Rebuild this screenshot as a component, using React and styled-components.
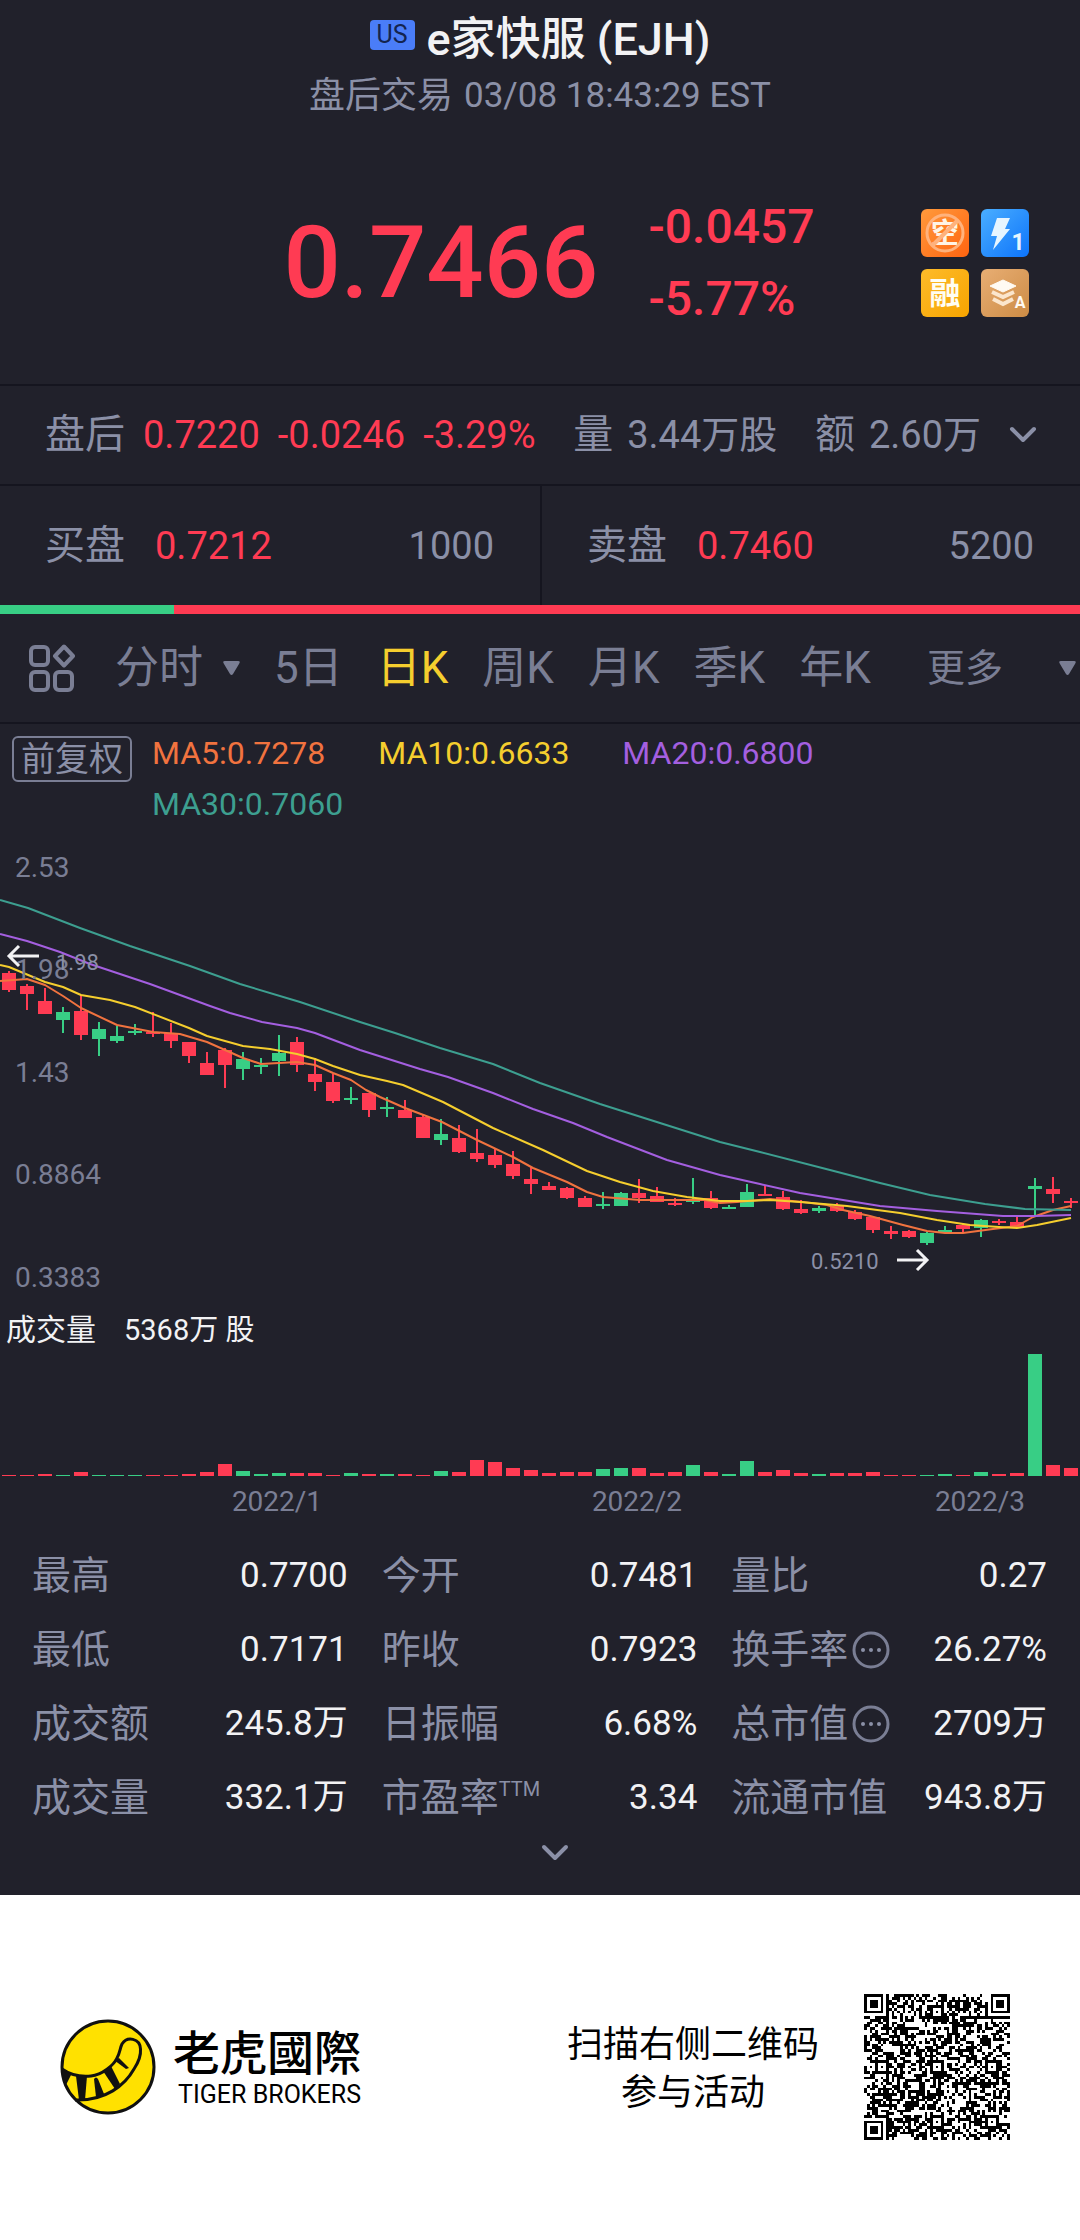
import styled, { createGlobalStyle } from "styled-components";

const colors = {
  bg: "#21212b",
  line: "#15151f",
  grey: "#8b90a7",
  dim: "#7a7e94",
  text: "#f2f2f4",
  red: "#ff3b53",
  green: "#38ce85",
  yellow: "#f5ce2e",
  orange: "#f1733f",
  purple: "#a45fe0",
  teal: "#3d9f90",
};

const GlobalStyle = createGlobalStyle`
  * {
    box-sizing: border-box;
  }

  body {
    margin: 0;
    background: #fff;
    font-family: Roboto, "Noto Sans CJK SC", sans-serif;
  }

  button {
    background: none;
    border: none;
    padding: 0;
    margin: 0;
    color: inherit;
    font: inherit;
    cursor: pointer;
  }

  svg {
    display: block;
  }
`;

const Quote = styled.main`
  background: ${colors.bg};
  color: ${colors.grey};
`;

const Header = styled.header`
  display: flex;
  flex-direction: column;
  align-items: center;
  padding-top: 10px;
`;

const Title = styled.h1`
  display: flex;
  align-items: center;
  gap: 12px;
  margin: 0;
  height: 60px;
  color: ${colors.text};
  font-size: 45px;
  font-weight: 500;
  line-height: 60px;
`;

const Market = styled.span`
  width: 45px;
  height: 30px;
  margin-bottom: 10px;
  border-radius: 4px;
  background: #4a7df8;
  color: #14244f;
  font-size: 25px;
  font-weight: 400;
  line-height: 30px;
  text-align: center;
`;

const Session = styled.p`
  display: flex;
  align-items: center;
  gap: 11px;
  margin: 0;
  font-size: 36px;
  line-height: 52px;
`;

const Time = styled.time`
  font-size: 35px;
`;

const PriceRow = styled.section`
  display: grid;
  grid-template-columns: 1fr auto 1fr;
  align-items: center;
  padding: 69px 51px 49px 69px;
  color: ${colors.red};
`;

const Price = styled.div`
  grid-column: 2;
  display: flex;
  align-items: center;
  gap: 50px;
`;

const Last = styled.strong`
  font-size: 101px;
  font-weight: 500;
  line-height: 120px;
`;

const Change = styled.div`
  display: flex;
  flex-direction: column;
  font-size: 48px;
  font-weight: 500;
  line-height: 72px;
`;

const Badges = styled.div`
  justify-self: end;
  display: grid;
  grid-template-columns: 48px 48px;
  gap: 12px;
`;

const AfterHours = styled.section`
  display: flex;
  align-items: center;
  justify-content: space-between;
  height: 102px;
  padding: 0 43px 0 45px;
  border-top: 2px solid ${colors.line};
  border-bottom: 2px solid ${colors.line};
  white-space: nowrap;
`;

const Group = styled.div`
  display: flex;
  align-items: center;
  gap: ${(p) => p.$gap}px;
`;

const Label = styled.span`
  font-size: 40px;
  line-height: 52px;
`;

const Num = styled.span`
  color: ${(p) => p.$color || "inherit"};
  font-size: 38px;
  line-height: 52px;
`;

const Book = styled.section`
  display: grid;
  grid-template-columns: 1fr 1fr;
`;

const BookSide = styled.div`
  display: flex;
  align-items: center;
  justify-content: space-between;
  height: 119px;
  padding: 0 46px 0 45px;

  & + & {
    border-left: 2px solid ${colors.line};
  }
`;

const Ratio = styled.div`
  display: flex;
  height: 9px;
  background: ${colors.red};
`;

const RatioBuy = styled.div`
  background: ${colors.green};
`;

const TabBar = styled.nav`
  display: flex;
  align-items: center;
  justify-content: space-between;
  height: 110px;
  padding: 0 4px 0 29px;
  border-bottom: 2px solid ${colors.line};
  color: ${colors.dim};
`;

const Tab = styled.button`
  display: flex;
  align-items: center;
  gap: ${(p) => p.$gap || 0}px;
  color: ${(p) => (p.$active ? colors.yellow : colors.dim)};
  font-size: ${(p) => (p.$small ? 38 : 44)}px;
  line-height: 56px;
`;

const Legend = styled.section`
  display: flex;
  align-items: flex-start;
  gap: 20px;
  padding: 12px 40px 0 12px;
`;

const Adjust = styled.button`
  flex: none;
  width: 120px;
  height: 46px;
  border: 2px solid ${colors.dim};
  border-radius: 6px;
  color: ${colors.grey};
  font-size: 34px;
  line-height: 42px;
`;

const Averages = styled.div`
  display: flex;
  flex-wrap: wrap;
  column-gap: 53px;
  font-size: 32px;
  line-height: 51px;
  margin-top: -8px;
`;

const Average = styled.span`
  color: ${(p) => p.$color};
`;

const Plot = styled.svg`
  width: 100%;
  height: auto;
  font-size: 28px;
  fill: ${colors.dim};
`;

const VolumeTitle = styled.div`
  display: flex;
  align-items: center;
  gap: 28px;
  padding-left: 6px;
  color: ${colors.text};
  font-size: 30px;
  line-height: 44px;
`;

const VolumeTotal = styled.span`
  font-size: 29px;
`;

const Stats = styled.dl`
  display: grid;
  grid-template-columns: repeat(3, 1fr);
  column-gap: 34px;
  margin: 0;
  padding: 11px 33px 0 32px;
`;

const Stat = styled.div`
  display: flex;
  align-items: center;
  justify-content: space-between;
  height: 74px;
`;

const StatName = styled.dt`
  display: flex;
  align-items: center;
  gap: 4px;
  font-size: 39px;
  line-height: 50px;
  white-space: nowrap;
`;

const StatValue = styled.dd`
  margin: 0;
  color: ${colors.text};
  font-size: 35px;
  line-height: 50px;
  white-space: nowrap;
`;

const Ttm = styled.small`
  align-self: flex-start;
  margin-left: -4px;
  font-size: 20px;
  line-height: 32px;
`;

const Expand = styled.div`
  display: flex;
  justify-content: center;
  padding: 8px 0 32px 30px;
`;

const Footer = styled.footer`
  display: flex;
  align-items: center;
  justify-content: space-between;
  padding: 99px 70px 99px 60px;
  background: #fff;
  color: #000;
`;

const BrandName = styled.div`
  font-size: 47px;
  font-weight: 500;
  line-height: 56px;
  font-family: "Noto Sans CJK TC", sans-serif;
`;

const BrandSub = styled.div`
  font-size: 25px;
  line-height: 34px;
  text-align: right;
`;

const Invite = styled.p`
  margin: 0;
  padding-top: 3px;
  font-size: 36px;
  line-height: 48px;
  text-align: center;
`;

// [high, open/close top, open/close bottom, low, volume, rising]
const candles = [
  [971, 973, 990, 992, 1, 0],
  [984, 986, 994, 1010, 1, 0],
  [988, 1001, 1014, 1014, 2, 0],
  [1007, 1012, 1020, 1033, 1, 1],
  [995, 1011, 1035, 1040, 4, 0],
  [1022, 1029, 1039, 1056, 1, 1],
  [1026, 1036, 1041, 1043, 1, 1],
  [1024, 1031, 1033, 1035, 1, 1],
  [1012, 1032, 1034, 1037, 1, 0],
  [1023, 1033, 1041, 1048, 1, 0],
  [1042, 1042, 1056, 1063, 2, 0],
  [1052, 1063, 1075, 1075, 4, 0],
  [1048, 1050, 1065, 1088, 12, 0],
  [1052, 1059, 1069, 1080, 5, 1],
  [1058, 1065, 1067, 1074, 2, 1],
  [1035, 1053, 1061, 1076, 3, 1],
  [1037, 1042, 1065, 1072, 3, 0],
  [1058, 1074, 1082, 1091, 3, 0],
  [1074, 1082, 1101, 1103, 1, 0],
  [1087, 1098, 1100, 1104, 3, 1],
  [1093, 1093, 1110, 1117, 2, 0],
  [1097, 1107, 1109, 1117, 2, 1],
  [1100, 1110, 1118, 1118, 2, 0],
  [1114, 1117, 1138, 1138, 1, 0],
  [1119, 1134, 1140, 1145, 5, 1],
  [1125, 1138, 1152, 1153, 4, 0],
  [1129, 1153, 1159, 1162, 16, 0],
  [1148, 1155, 1165, 1168, 14, 0],
  [1151, 1164, 1176, 1179, 8, 0],
  [1167, 1179, 1184, 1194, 6, 0],
  [1182, 1186, 1190, 1190, 3, 0],
  [1187, 1188, 1198, 1199, 4, 0],
  [1196, 1198, 1207, 1207, 4, 0],
  [1192, 1204, 1206, 1209, 7, 1],
  [1192, 1193, 1206, 1206, 8, 1],
  [1179, 1193, 1198, 1203, 8, 0],
  [1187, 1196, 1202, 1202, 3, 0],
  [1198, 1203, 1205, 1206, 4, 0],
  [1178, 1200, 1202, 1204, 11, 1],
  [1191, 1198, 1208, 1209, 4, 0],
  [1205, 1207, 1209, 1209, 2, 1],
  [1184, 1192, 1207, 1207, 15, 1],
  [1186, 1194, 1196, 1196, 4, 0],
  [1191, 1197, 1209, 1210, 6, 0],
  [1200, 1209, 1213, 1214, 3, 0],
  [1206, 1208, 1211, 1213, 2, 1],
  [1203, 1206, 1211, 1212, 3, 0],
  [1210, 1212, 1219, 1220, 3, 0],
  [1217, 1217, 1230, 1233, 4, 0],
  [1226, 1231, 1234, 1239, 1, 0],
  [1230, 1231, 1237, 1238, 1, 0],
  [1232, 1233, 1243, 1245, 1, 1],
  [1226, 1230, 1232, 1232, 2, 1],
  [1224, 1225, 1229, 1232, 1, 0],
  [1219, 1220, 1228, 1237, 4, 1],
  [1219, 1221, 1223, 1225, 2, 0],
  [1216, 1222, 1227, 1227, 3, 0],
  [1178, 1186, 1189, 1215, 122, 1],
  [1177, 1189, 1194, 1203, 11, 0],
  [1198, 1201, 1203, 1208, 8, 0],
];

const averages = [
  {
    label: "MA5:0.7278",
    color: colors.orange,
    points:
      "0,981 27,979 45,985 63,996 81,1008 117,1025 153,1032 180,1034 207,1042 243,1058 261,1064 279,1063 297,1062 315,1065 333,1073 351,1080 366,1090 380,1097 405,1108 442,1122 477,1140 513,1157 533,1168 567,1182 587,1192 603,1197 640,1200 705,1200 720,1203 737,1202 770,1199 803,1202 827,1205 843,1210 870,1216 903,1225 927,1231 945,1233 963,1233 993,1229 1017,1226 1033,1217 1053,1210 1071,1206",
  },
  {
    label: "MA10:0.6633",
    color: colors.yellow,
    points:
      "0,965 9,967 45,982 63,987 81,995 110,1000 135,1007 189,1028 207,1036 243,1046 270,1049 297,1054 315,1059 333,1066 360,1075 387,1081 403,1085 443,1102 493,1128 543,1150 587,1171 620,1182 653,1191 687,1197 720,1201 747,1201 770,1200 800,1202 847,1206 900,1213 937,1220 970,1225 999,1227 1017,1228 1037,1225 1071,1218",
  },
  {
    label: "MA20:0.6800",
    color: colors.purple,
    points:
      "0,934 27,941 60,952 90,964 150,984 210,1006 230,1013 262,1022 297,1028 315,1033 360,1050 420,1069 448,1077 493,1093 533,1109 573,1123 607,1137 667,1160 720,1175 760,1184 800,1193 880,1206 937,1211 1003,1216 1035,1216 1071,1215",
  },
  {
    label: "MA30:0.7060",
    color: colors.teal,
    points:
      "0,900 28,908 80,928 130,946 190,966 240,984 300,1002 360,1022 395,1033 440,1048 493,1064 540,1083 600,1104 660,1123 720,1142 760,1152 830,1170 880,1183 930,1195 985,1204 1025,1209 1071,1210",
  },
];

const priceTicks = [
  ["2.53", 877],
  ["1.98", 979],
  ["1.43", 1082],
  ["0.8864", 1184],
  ["0.3383", 1287],
];

const periods = ["5日", "日K", "周K", "月K", "季K", "年K"];

const stats = [
  { name: "最高", value: "0.7700" },
  { name: "今开", value: "0.7481" },
  { name: "量比", value: "0.27" },
  { name: "最低", value: "0.7171" },
  { name: "昨收", value: "0.7923" },
  { name: "换手率", value: "26.27%", more: true },
  { name: "成交额", value: "245.8万" },
  { name: "日振幅", value: "6.68%" },
  { name: "总市值", value: "2709万", more: true },
  { name: "成交量", value: "332.1万" },
  { name: "市盈率", value: "3.34", ttm: true },
  { name: "流通市值", value: "943.8万" },
];

function Chevron({ width }) {
  return (
    <svg width={width} height="20" viewBox="0 0 28 20" fill="none" aria-hidden="true">
      <path d="M3 4 14 15 25 4" stroke={colors.grey} strokeWidth="4" strokeLinecap="round" strokeLinejoin="round" />
    </svg>
  );
}

function Triangle() {
  return (
    <svg width="17" height="14" viewBox="0 0 17 14" aria-hidden="true">
      <path d="M2 0H15Q18 0 16 3L10 13Q8.500 15 7 13L1 3Q-1 0 2 0Z" fill={colors.dim} />
    </svg>
  );
}

function GridIcon() {
  return (
    <svg width="46" height="48" viewBox="0 0 46 48" fill="none" stroke={colors.dim} strokeWidth="4" aria-hidden="true">
      <rect x="2" y="3" width="17" height="18" rx="4" />
      <path d="M35 2.500 44 12 35 21.500 26 12Z" strokeLinejoin="round" />
      <rect x="2" y="28" width="17" height="18" rx="4" />
      <rect x="26" y="28" width="17" height="18" rx="4" />
    </svg>
  );
}

function MoreIcon() {
  return (
    <svg width="38" height="38" viewBox="0 0 38 38" fill="none" aria-hidden="true">
      <circle cx="19" cy="19" r="17" stroke={colors.dim} strokeWidth="3" />
      <g fill={colors.grey}>
        <circle cx="11" cy="19" r="2" />
        <circle cx="19" cy="19" r="2" />
        <circle cx="27" cy="19" r="2" />
      </g>
    </svg>
  );
}

function Badge({ id, from, to, label, children }) {
  return (
    <svg width="48" height="48" viewBox="0 0 48 48" role="img" aria-label={label}>
      <defs>
        <linearGradient id={id} x1="0" y1="0" x2="1" y2="1">
          <stop offset="0" stopColor={from} />
          <stop offset="1" stopColor={to} />
        </linearGradient>
      </defs>
      <rect width="48" height="48" rx="6" fill={`url(#${id})`} />
      {children}
    </svg>
  );
}

function BadgeGrid() {
  return (
    <Badges>
      <Badge id="short" from="#ff9a3c" to="#ff6410" label="空">
        <text x="24" y="34" fontSize="28" fontWeight="700" textAnchor="middle" fill="#fff4e6">空</text>
        <g fill="none" stroke="#ffb27c" strokeWidth="3">
          <circle cx="24" cy="24" r="18" />
          <path d="M11 37 37 11" strokeWidth="4" />
        </g>
      </Badge>
      <Badge id="level" from="#4aaeff" to="#0d74fb" label="Level 1">
        <path d="M16 9H29L24 20H29L12 41 16 27H10Z" fill="#e6f5ff" />
        <text x="37" y="41" fontSize="23" fontWeight="700" textAnchor="middle" fill="#e6f5ff">1</text>
      </Badge>
      <Badge id="margin" from="#fdbb2a" to="#f7a400" label="融">
        <text x="24" y="35" fontSize="31" fontWeight="700" textAnchor="middle" fill="#fffdf2">融</text>
      </Badge>
      <Badge id="layers" from="#e8ae74" to="#cd8c45" label="A">
        <path d="M22 11 35 17 22 23 9 17Z" fill="#fffaf2" stroke="#fffaf2" strokeLinejoin="round" />
        <path d="M11 23 22 28 33 23M12 30 22 35 32 30" fill="none" stroke="#fbe6cd" strokeWidth="4" />
        <text x="39" y="39" fontSize="16" fontWeight="700" textAnchor="middle" fill="#fffaf2">A</text>
      </Badge>
    </Badges>
  );
}

function PriceChart() {
  return (
    <Plot viewBox="0 830 1080 478" role="img" aria-label="日K">
      {candles.map(([high, top, bottom, low, , up], i) => {
        const fill = up ? colors.green : colors.red;
        return (
          <g key={i} fill={fill}>
            <rect x={8 + i * 18} y={high} width="2" height={low - high} />
            <rect x={2 + i * 18} y={top} width="14" height={bottom - top} />
          </g>
        );
      })}
      {averages.map((avg) => (
        <polyline key={avg.label} points={avg.points} fill="none" stroke={avg.color} strokeWidth="2" strokeLinejoin="round" />
      ))}
      {priceTicks.map(([tick, y]) => (
        <text key={tick} x="15" y={y}>{tick}</text>
      ))}
      <g fontSize="22" fill={colors.grey}>
        <text x="56" y="970">1.98</text>
        <text x="811" y="1269">0.5210</text>
      </g>
      <g fill="none" stroke={colors.text} strokeWidth="3">
        <path d="M39 956H9M19 946 9 956 19 966" />
        <path d="M897 1260H927M917 1250 927 1260 917 1270" />
      </g>
    </Plot>
  );
}

function VolumeChart() {
  return (
    <Plot viewBox="0 0 1080 176" role="img" aria-label="成交量">
      {candles.map(([, , , , volume, up], i) => (
        <rect key={i} x={2 + i * 18} y={124 - volume} width="14" height={volume} fill={up ? colors.green : colors.red} />
      ))}
      <g textAnchor="middle">
        <text x="277" y="159">2022/1</text>
        <text x="637" y="159">2022/2</text>
        <text x="980" y="159">2022/3</text>
      </g>
    </Plot>
  );
}

function TigerLogo() {
  return (
    <svg width="96" height="96" viewBox="0 0 96 96" aria-hidden="true">
      <circle cx="48" cy="48" r="46" fill="#ffe100" stroke="#111" strokeWidth="3" />
      <path
        d="M2 50C12 57 22 58 31 57 42 56 54 46 57 39 60 34 60 29 62 25 67 17 80 19 80.500 30 81 36 78 44 74 50 65 66 46 82 15 81"
        fill="none"
        stroke="#111"
        strokeWidth="3"
      />
      <path d="M2 50 11 56 5 68Z" fill="#111" />
      <path d="M16 57H27L25 81H19Z" fill="#111" />
      <path d="M34 60Q36 57 38 60L44 75 36 78Z" fill="#111" />
      <path d="M43 52 51 47 60 65 55 70Z" fill="#111" />
      <path d="M54 41 59 39 69 49 66 50Z" fill="#111" />
    </svg>
  );
}

const QR_SIZE = 53;

function finderAt(x, y, left, top) {
  const dx = x - left;
  const dy = y - top;
  if (dx < -1 || dx > 7 || dy < -1 || dy > 7) return null;
  const ring = Math.max(Math.abs(dx - 3), Math.abs(dy - 3));
  return ring === 3 || ring < 2;
}

function buildCode() {
  let seed = 20220308;
  let path = "";
  const anchors = [6, 26, 46];
  for (let y = 0; y < QR_SIZE; y++) {
    for (let x = 0; x < QR_SIZE; x++) {
      seed = (seed * 48271) % 2147483647;
      let dark = seed % 100 < 52;
      if (x === 6 || y === 6) dark = (x + y) % 2 === 0;
      const ax = anchors.find((a) => Math.abs(a - x) < 3);
      const ay = anchors.find((a) => Math.abs(a - y) < 3);
      if (ax && ay) dark = Math.max(Math.abs(ax - x), Math.abs(ay - y)) !== 1;
      const finder =
        finderAt(x, y, 0, 0) ?? finderAt(x, y, QR_SIZE - 7, 0) ?? finderAt(x, y, 0, QR_SIZE - 7);
      if (finder !== null) dark = finder;
      if (dark) path += `M${x} ${y}h1v1h-1z`;
    }
  }
  return path;
}

const codePath = buildCode();

function QrCode() {
  return (
    <svg width="146" height="146" viewBox={`0 0 ${QR_SIZE} ${QR_SIZE}`} shapeRendering="crispEdges" role="img" aria-label="二维码">
      <path d={codePath} />
    </svg>
  );
}

export default function App() {
  const bid = 1000;
  const ask = 5200;

  return (
    <>
      <GlobalStyle />
      <Quote>
        <Header>
          <Title>
            <Market>US</Market>
            e家快服 (EJH)
          </Title>
          <Session>
            盘后交易
            <Time>03/08 18:43:29 EST</Time>
          </Session>
        </Header>

        <PriceRow>
          <Price>
            <Last>0.7466</Last>
            <Change>
              <span>-0.0457</span>
              <span>-5.77%</span>
            </Change>
          </Price>
          <BadgeGrid />
        </PriceRow>

        <AfterHours>
          <Group $gap={18}>
            <Label>盘后</Label>
            <Group $gap={18}>
              <Num $color={colors.red}>0.7220</Num>
              <Num $color={colors.red}>-0.0246</Num>
              <Num $color={colors.red}>-3.29%</Num>
            </Group>
          </Group>
          <Group $gap={14}>
            <Label>量</Label>
            <Num>3.44万股</Num>
          </Group>
          <Group $gap={28}>
            <Group $gap={14}>
              <Label>额</Label>
              <Num>2.60万</Num>
            </Group>
            <button aria-label="展开盘后">
              <Chevron width={28} />
            </button>
          </Group>
        </AfterHours>

        <Book>
          <BookSide>
            <Group $gap={30}>
              <Label>买盘</Label>
              <Num $color={colors.red}>0.7212</Num>
            </Group>
            <Num>{bid}</Num>
          </BookSide>
          <BookSide>
            <Group $gap={30}>
              <Label>卖盘</Label>
              <Num $color={colors.red}>0.7460</Num>
            </Group>
            <Num>{ask}</Num>
          </BookSide>
        </Book>
        <Ratio>
          <RatioBuy style={{ width: `${(bid / (bid + ask)) * 100}%` }} />
        </Ratio>

        <TabBar>
          <Group $gap={40}>
            <button aria-label="指标">
              <GridIcon />
            </button>
            <Group $gap={34}>
              <Tab $gap={20}>
                分时
                <Triangle />
              </Tab>
              {periods.map((period) => (
                <Tab key={period} $active={period === "日K"}>
                  {period}
                </Tab>
              ))}
            </Group>
          </Group>
          <Tab $small $gap={56}>
            更多
            <Triangle />
          </Tab>
        </TabBar>

        <Legend>
          <Adjust>前复权</Adjust>
          <Averages>
            {averages.map((avg) => (
              <Average key={avg.label} $color={avg.color}>
                {avg.label}
              </Average>
            ))}
          </Averages>
        </Legend>
        <PriceChart />
        <VolumeTitle>
          <span>成交量</span>
          <VolumeTotal>5368万 股</VolumeTotal>
        </VolumeTitle>
        <VolumeChart />

        <Stats>
          {stats.map((stat) => (
            <Stat key={stat.name}>
              <StatName>
                {stat.name}
                {stat.more && <MoreIcon />}
                {stat.ttm && <Ttm>TTM</Ttm>}
              </StatName>
              <StatValue>{stat.value}</StatValue>
            </Stat>
          ))}
        </Stats>
        <Expand>
          <button aria-label="展开更多">
            <Chevron width={30} />
          </button>
        </Expand>
      </Quote>

      <Footer>
        <Group $gap={17}>
          <TigerLogo />
          <div>
            <BrandName>老虎國際</BrandName>
            <BrandSub>TIGER BROKERS</BrandSub>
          </div>
        </Group>
        <Group $gap={45}>
          <Invite>
            扫描右侧二维码
            <br />
            参与活动
          </Invite>
          <QrCode />
        </Group>
      </Footer>
    </>
  );
}
